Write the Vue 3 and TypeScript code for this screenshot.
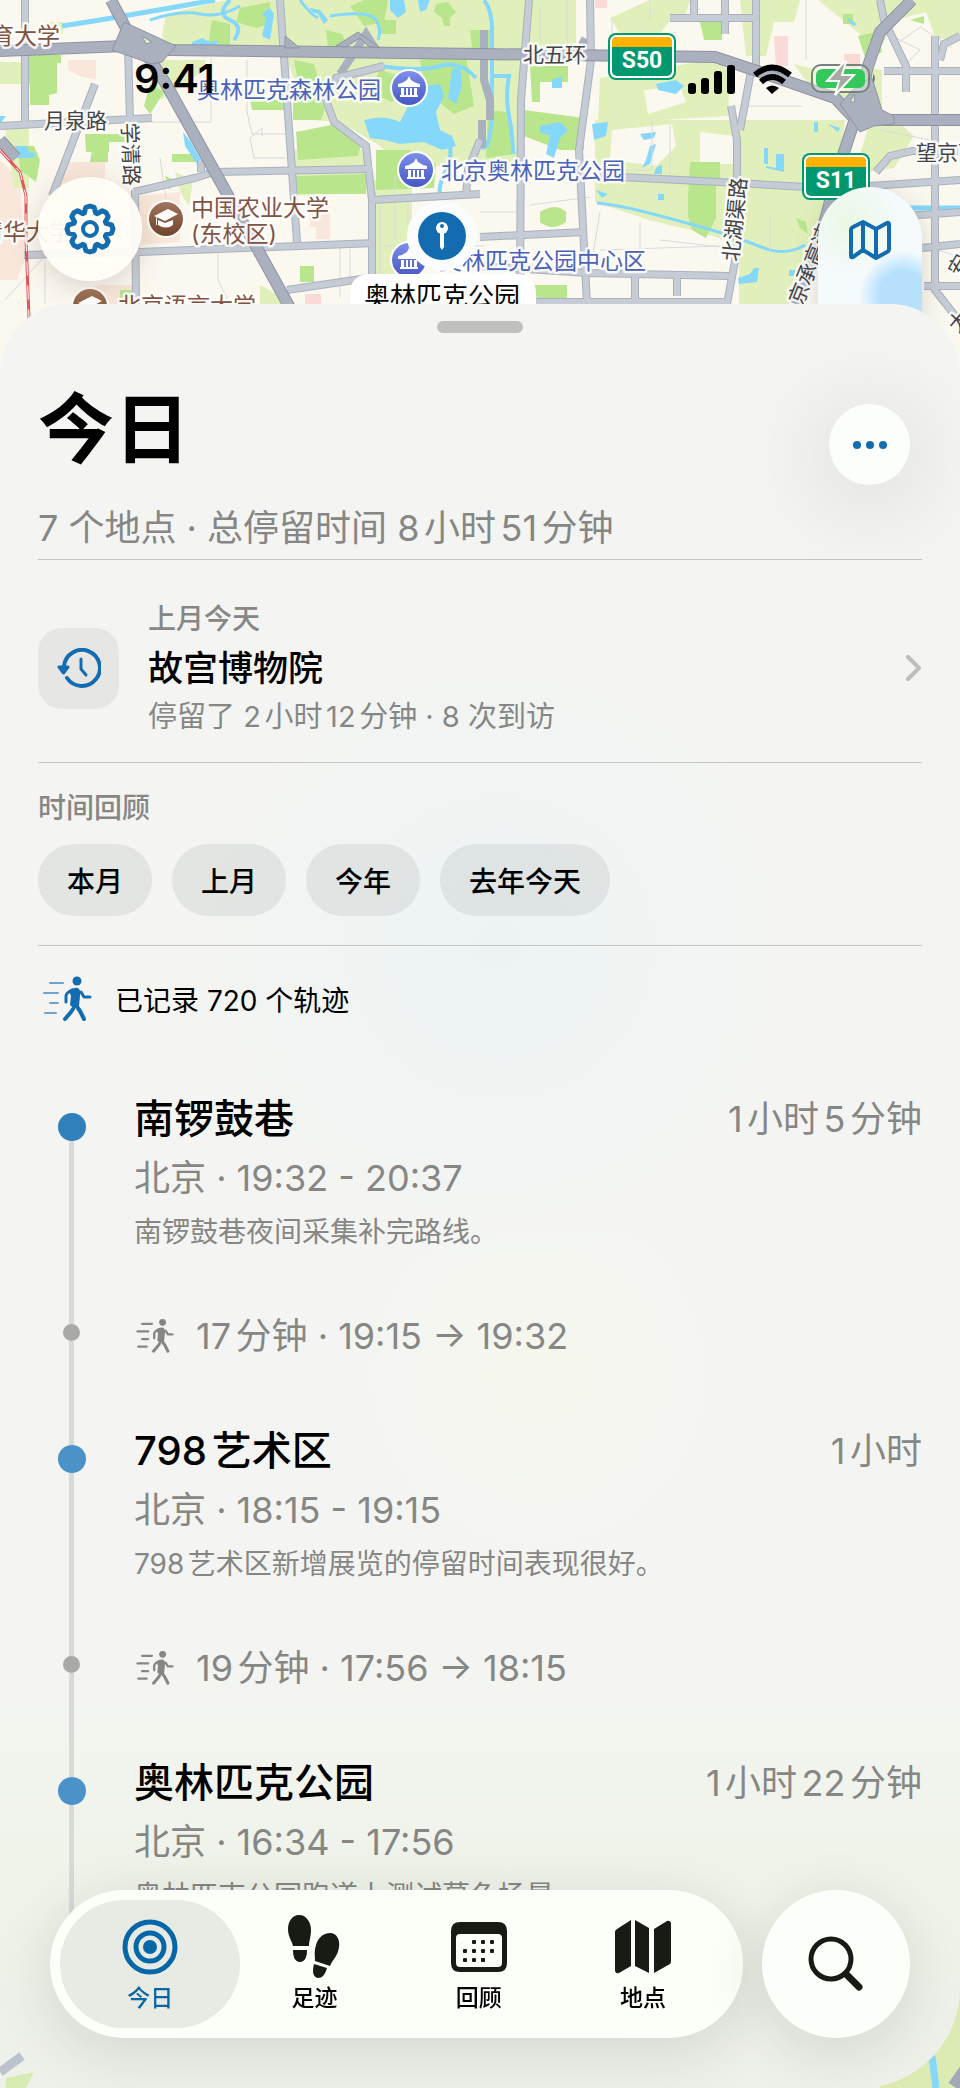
<script setup lang="ts">
interface Stop {
  name: string
  city: string
  span: string
  note: string
  duration: string
  walk?: string
}

interface Tab {
  id: string
  label: string
}

const stops: Stop[] = [
  {
    name: '南锣鼓巷',
    city: '北京',
    span: '19:32 - 20:37',
    note: '南锣鼓巷夜间采集补完路线。',
    duration: '1小时5分钟',
    walk: '17分钟 · 19:15 → 19:32',
  },
  {
    name: '798艺术区',
    city: '北京',
    span: '18:15 - 19:15',
    note: '798艺术区新增展览的停留时间表现很好。',
    duration: '1小时',
    walk: '19分钟 · 17:56 → 18:15',
  },
  {
    name: '奥林匹克公园',
    city: '北京',
    span: '16:34 - 17:56',
    note: '奥林匹克公园跑道上测试暮色场景。',
    duration: '1小时22分钟',
  },
]

const periods = ['本月', '上月', '今年', '去年今天']

const tabs: Tab[] = [
  { id: 'today', label: '今日' },
  { id: 'steps', label: '足迹' },
  { id: 'review', label: '回顾' },
  { id: 'places', label: '地点' },
]

const pavilions = [
  { x: 409, y: 88 },
  { x: 416, y: 170 },
  { x: 409, y: 260 },
]

const shields = [
  { x: 608, y: 33, label: 'S50' },
  { x: 802, y: 153, label: 'S11' },
]

// Outline of an eight-toothed gear centred on 0,0
function gearPath(): string {
  const teeth = 8
  const step = (Math.PI * 2) / teeth
  const points: string[] = []
  for (let i = 0; i < teeth; i++) {
    const a = i * step - Math.PI / 2
    const corners: [number, number][] = [
      [17, -0.34],
      [22, -0.19],
      [23, 0],
      [22, 0.19],
      [17, 0.34],
    ]
    for (const [r, d] of corners) {
      points.push(`${(r * Math.cos(a + d)).toFixed(2)} ${(r * Math.sin(a + d)).toFixed(2)}`)
    }
  }
  return `M${points.join('L')}Z`
}
const gear = gearPath()
</script>

<template>
  <div class="screen">
    <div class="map" aria-hidden="true">
      <svg class="map-art" viewBox="0 0 960 400" preserveAspectRatio="xMidYMin slice">
        <defs>
          <linearGradient id="poiBlue" x1="0" y1="0" x2="0" y2="1">
            <stop offset="0" stop-color="#7c8fe8" />
            <stop offset="1" stop-color="#4658c4" />
          </linearGradient>
          <linearGradient id="poiBrown" x1="0" y1="0" x2="0" y2="1">
            <stop offset="0" stop-color="#a2765c" />
            <stop offset="1" stop-color="#6f452c" />
          </linearGradient>
        </defs>
        <rect width="960" height="400" fill="#fbf8f0" />

        <g fill="#f9e7dc">
          <path d="M68 60h28v20l-16-4-12-6z M60 162h45v38l-10 8H62z M0 160l20 20 5 80 -8 20H0z M136 196l44-4v50l-42 3z M310 205h20v34h-14v-12h-6z M95 285h45v19H95z" />
          <path d="M774 36h14v30h-12z M844 54h16v14h-16z M595 0h12v8h-12z M305 294h16v10h-16z" fill="#f9dad6" />
        </g>

        <g fill="#e1f0bb">
          <path d="M166 14l60-14h350v46l-60 4H170l-8-14z" />
          <path d="M45 22h18v12H45z M0 62h24v22H0z M145 60h60v10l-44 30 z" />
          <path d="M285 56h240l-2 110H400l-20-20-40-24-30-2z" />
          <path d="M292 150l70 0 8 40-76 6z" />
          <path d="M595 120h250l-8 60-20 70-28 54h-50v-60l-40-12-50-12-54-18z" />
          <path d="M600 78l110-18 20 10-2 46-130 8z" />
          <path d="M536 0h24v30l20 16h-46z M610 18l40-18h40l-6 20h-14l-10 14h-40z M740 0h60l-6 22h-20l-8 34h-20z" />
          <path d="M818 0h142v36l-24 4-10-28-30 8-20 34 -16-20z M794 64l58 16v20l-40-10z" />
          <path d="M862 66l20 4v40h-10z M868 128l30-6 16 14-20 32-40 6z" />
          <path d="M5 128h24v60H14z M175 172l18 8-4 26-8-12z M260 285l18 10 6 9h-24z M372 180h40v130h-36z" />
          <path d="M752 272l46-8-6 20-40 16z" />
        </g>
        <path d="M612 130l60-6 4 22-20 20-46-6z M644 90l36-4 6 16-38 12z M700 132l34 4v28h-34z" fill="#fbf8f0" />

        <g fill="#b9e68d">
          <path d="M27 55h34v8h-4v30l-8 2v10H30V84h-4z M85 134h44v8h-20v10H86z M92 150h16v12H90z M18 146h16l6 14-4 22-16-12z" />
          <path d="M150 84l14 8-14 22-6-8z M165 176l10 4-6 10z M172 154h24v8h-24z" />
          <path d="M250 100h34v10h-32z M293 82l22-4v16l10 14-4 12h-28z M294 60l20 4 4 14-20 4z" />
          <path d="M296 132l40-8 26 18-4 14-60 4z M296 176h50v18h-48z M300 176l66-2v20h-40z" />
          <path d="M376 150h34l26 14-2 24-58 2z M420 60l46-4 8 50-20 8-28-22z M380 70l28 8-16 24-24-10z" />
          <path d="M326 30l16 4 6 14h-20z M350 6l14-6h24l-4 22-20 4z M240 8l30-6v22l-14 4-20-6z M212 20l18 4v22h-22z" />
          <path d="M436 4l12-2 8 10-6 6v8h-6l-2-8-8-6z M378 20h18v14h-18z M470 30h22v18h-20z" />
          <path d="M488 110l18 2 10 42-30 4z M530 66h38v16h-28v20h-8z M524 110l60 8v32h-24l-36-14z" />
          <path d="M540 212q16-10 26 0v10q-14 10-26 0z M690 162h30v16h-4v40l-10 20-14-8-4-14v-20z M700 22h22v18h-18z" />
          <path d="M796 218l10 4 2 12-8-6z M533 285h34v14h-30z M858 36l18-4 6 20-16 8z M843 14h10v10h-10z" />
          <path d="M300 266h14v16h-14z M398 290h16v14h-16z M120 290h14v14h-14z M910 20l14-4v8z" />
        </g>

        <g fill="#86d8fb">
          <path d="M364 120q20-6 36 2l10-20 16-16 14-2 4 12-8 16 4 18 12 6 4 10-14 4-18-8-24 2-16-4-14-2z" />
          <path d="M15 146h12l2 6 8 2-4 4h-18z M0 116h6l-6 8z M183 132l8 10 10 18-4 4-12-18z" />
          <path d="M452 70l8-4 2 20-6 18-8-6z M192 42l10-4 8 4 8-2-2 6-24-1z M262 14l8-6 4 6-4 26 -8-4 4-18z" />
          <path d="M390 0h14l2 12-8 6-8-8z M310 8l10 2 8 10-4 4-6-10-6-2z M418 0h12l-4 10-6 2z" />
          <path d="M552 80l10-4v12h-10z M540 126l20-4 8 8-8 8-6 20-8-4 4-18-10-4z M592 124l16-2-2 14-12 4z" />
          <path d="M656 84l20-4 8 6-8 8-18-4z M640 134l16-2-2 6-10 2z M650 146l6-2-6 20-8 4 4-8z M656 168l6-4v10h-8z" />
          <path d="M764 148h4v16h-4z M766 166l10 2v-14h8v18l-18-4z M814 122h4v10h-4z M828 124l12 4-2 4z M845 16l12 8-4 2z" />
          <path d="M738 278l12-4 4-6h5l-2 14-18 2z M789 270h6v6h-6z M658 194h6v6h-6z M596 190l12 4-6 4z" />
        </g>
        <g fill="none" stroke="#86d8fb">
          <path d="M62 26L100 20L170 8L215 0" stroke-width="5" />
          <path d="M150 20q30-10 50-6t40-8" stroke-width="3" />
          <path d="M230 0q-14 14 0 20t4 20" stroke-width="4" />
          <path d="M300 0q10 14 18 18M330 16q40-6 46 4t2 20" stroke-width="3" />
          <path d="M484 0q8 10 8 30t0 70-10 48M493 76h16q-4 20 0 40t4 38" stroke-width="4" />
          <path d="M597 203q20 2 44 8t60 16 60 20 44-2" stroke-width="3" />
          <path d="M380 66q40 6 60 0t36 12M448 140q6 14-2 30t-6 24" stroke-width="4" />
          <path d="M905 208H960" stroke-width="5" />
        </g>

        <g fill="none" stroke="#d9dadd" stroke-width="1">
          <path d="M211 58v64H152M247 60v52l5 22h33M262 136v-8l-12 10 4 20h32M160 158l6 40M218 250v30l12 24M45 262v42M5 300l40-44" />
          <path d="M540 6v34M567 0v50M612 18v26h44M650 0v20M652 120v50h-64M480 212h38M530 205l60-8M640 222v56M600 250l120-4M600 212l-10 60" />
          <path d="M700 8l-12 12M806 0v60M740 106h62M670 124v60M770 214v40M880 30l40 20-20 20M896 44l26-18M922 28l30 20" />
          <path d="M380 200v100M395 176v64M408 194v30M340 248v50M350 246v32M384 246h100M660 240l70 8M880 130l50 10M896 236l60 20" />
        </g>

        <g fill="none" stroke="#a9b1bd" stroke-width="8">
          <path d="M25 0V122M0 126L152 118M128 46L130 120M95 84L52 196M280 0L287 100L297 242M529 0L521 100L520 304" />
          <path d="M590 0L591 60L579 150L587 304M134 192L195 178L214 172L372 169M24 255L140 252L375 243M135 190L136 304" />
          <path d="M201 172V160M384 66L336 78L326 100L334 122L366 146L372 200V304M372 200L480 194M480 140L468 170L466 196" />
          <path d="M600 176L720 182L822 188M731 106L737 140V250L727 304M752 66L740 130M756 0V66M480 237L585 232M480 266L587 273L729 276" />
          <path d="M287 290L375 277M480 302H725M635 276V304M677 276V296M670 18H756M694 0V18M725 0V34" />
          <path d="M935 36V290L960 322M880 0L884 20L906 66V92M884 71H960M876 172L890 156L912 151H960M870 186L960 180M906 216L960 212M922 248L960 244M940 60L944 44L960 36M924 286H960" />
          <path d="M484 30V80L490 100V120M482 120V148M580 40L592 46M340 74L356 50L366 34L380 56" />
        </g>
        <g fill="none" stroke="#c5ccd5" stroke-width="6">
          <path d="M25 0V122M0 126L152 118M128 46L130 120M95 84L52 196M280 0L287 100L297 242M529 0L521 100L520 304" />
          <path d="M590 0L591 60L579 150L587 304M134 192L195 178L214 172L372 169M24 255L140 252L375 243M135 190L136 304" />
          <path d="M201 172V160M384 66L336 78L326 100L334 122L366 146L372 200V304M372 200L480 194M480 140L468 170L466 196" />
          <path d="M600 176L720 182L822 188M731 106L737 140V250L727 304M752 66L740 130M756 0V66M480 237L585 232M480 266L587 273L729 276" />
          <path d="M287 290L375 277M480 302H725M635 276V304M677 276V296M670 18H756M694 0V18M725 0V34" />
          <path d="M935 36V290L960 322M880 0L884 20L906 66V92M884 71H960M876 172L890 156L912 151H960M870 186L960 180M906 216L960 212M922 248L960 244M940 60L944 44L960 36M924 286H960" />
        </g>
        <g fill="none" stroke="#8d93a3" stroke-width="12" stroke-linejoin="round">
          <path d="M0 51L125 46L170 50L480 54L715 57L760 72L835 98L856 120H960" />
          <path d="M111 0L130 36L152 62L166 84L225 190L290 308" />
          <path d="M912 0L880 32L868 66L858 110L838 170L822 232L796 304" />
          <path d="M0 140L16 158" />
        </g>
        <g fill="none" stroke="#abb0bf" stroke-width="10" stroke-linejoin="round">
          <path d="M0 51L125 46L170 50L480 54L715 57L760 72L835 98L856 120H960" />
          <path d="M111 0L130 36L152 62L166 84L225 190L290 308" />
          <path d="M912 0L880 32L868 66L858 110L838 170L822 232L796 304" />
          <path d="M0 140L16 158" />
        </g>
        <g fill="#abb0bf" stroke="#8d93a3">
          <path d="M124 22L176 46L162 62L152 64L112 50Z M858 84L872 78L882 110L894 116V124L874 126L860 132L840 104Z" />
          <path d="M142 36l10 6-6 2zM850 102l4-8 1 8z" fill="#dfe9c4" />
          <path d="M336 46L358 32L380 48L368 46L360 38L346 47Z M285 36L300 48H285Z" />
        </g>
        <path d="M0 150L20 172L26 196V240L29 318" fill="none" stroke="#e2565a" stroke-width="3" />
        <path d="M0 150L20 172L26 196V240L29 318" fill="none" stroke="#fff" stroke-width="1" stroke-dasharray="14 10" />

        <g class="halo brown">
          <text x="-9" y="44">育大学</text>
          <text x="191" y="216">中国农业大学</text>
          <text x="191" y="242">(东校区)</text>
          <text x="-20" y="240">清华大学</text>
          <text x="118" y="314">北京语言大学</text>
        </g>
        <g class="halo blue">
          <text x="197" y="98">奥林匹克森林公园</text>
          <text x="441" y="179">北京奥林匹克公园</text>
          <text x="439" y="269">奥林匹克公园中心区</text>
        </g>
        <g class="halo road">
          <text x="523" y="62">北五环</text>
          <text x="44" y="128">月泉路</text>
          <text x="916" y="160">望京西</text>
          <text transform="translate(122 123) rotate(88)">学清路</text>
          <text transform="translate(738 262) rotate(-84)">北湖渠路</text>
          <text transform="translate(802 306) rotate(-68)">京承高速</text>
          <text transform="translate(960 278) rotate(-60)">安</text>
          <text transform="translate(958 334) rotate(-50)">大</text>
        </g>

        <g v-for="(p, i) in pavilions" :key="i" :transform="`translate(${p.x} ${p.y})`">
          <circle r="19" fill="#fff" />
          <circle r="17" fill="url(#poiBlue)" />
          <path d="M0-12l2 4q4 3 9 4v3h-22v-3q5-1 9-4z M-8 0h3v7h-3z M-3 0h2v7h-2z M1 0h2v7h-2z M5 0h3v7h-3z M-9 7H9v2H-9z" fill="#fff" />
        </g>
        <g v-for="p in [{ x: 166, y: 219 }, { x: 90, y: 306 }]" :key="p.y" :transform="`translate(${p.x} ${p.y})`">
          <circle r="19" fill="#fff" />
          <circle r="17" fill="url(#poiBrown)" />
          <path d="M-12-3L2-10L12-5L-1 2Z M-8 1L-1 4L7 1V6Q0 11-8 6Z M-10-2v8h1v-7z" fill="#fff" />
        </g>

        <g v-for="s in shields" :key="s.label" :transform="`translate(${s.x} ${s.y})`">
          <rect width="68" height="47" rx="8" fill="#00996f" />
          <rect x="2" y="2" width="64" height="43" rx="6" fill="#fff" />
          <rect x="4" y="4" width="60" height="39" rx="5" fill="#00996f" />
          <path d="M4 14V9Q4 4 9 4H59Q64 4 64 9V14Z" fill="#ffb300" />
          <text x="34" y="35" class="shield">{{ s.label }}</text>
        </g>

        <g transform="translate(442 236)">
          <rect x="-92" y="38" width="186" height="60" rx="18" fill="#fff" />
          <circle r="35" fill="#fafcfd" />
          <circle r="24" fill="#146cb0" />
          <circle cy="-8" r="6" fill="#fff" />
          <circle cy="-10" r="2" fill="#146cb0" />
          <path d="M-2-4h4v15l-2 3-2-3z" fill="#fff" />
          <text x="0" y="70" class="place">奥林匹克公园</text>
        </g>
      </svg>
      <svg class="map-foot" viewBox="0 0 960 120" preserveAspectRatio="none">
        <rect width="960" height="120" fill="#eef0ea" />
        <path d="M0 104L22 88" stroke="#bcc3cd" stroke-width="9" />
        <path d="M6 110l28-6-8 16H6z" fill="#d9ebb4" />
        <path d="M880 0h80v120h-80z" fill="#dcebb4" />
        <path d="M932 88l4 32" stroke="#86d8fb" stroke-width="7" />
        <path d="M956 120l14-20" stroke="#a3a8b5" stroke-width="18" />
      </svg>
    </div>

    <div class="status">
      <span class="clock">9:41</span>
      <svg class="indicators" viewBox="0 0 190 32" aria-hidden="true">
        <rect x="0" y="20" width="8" height="11" rx="3" />
        <rect x="13" y="15" width="8" height="16" rx="3" />
        <rect x="26" y="8" width="8" height="23" rx="3" />
        <rect x="39" y="2" width="8" height="29" rx="3" />
        <g fill="none" stroke="#000" stroke-width="6">
          <path d="M67 12Q84-3 102 12" />
          <path d="M73 19Q84 9 96 19" />
        </g>
        <path d="M78 25Q84 20 91 25L84 31Z" />
        <rect x="124" y="2" width="57" height="27" rx="9" fill="#fff" fill-opacity="0.4" stroke="#77837a" stroke-width="2" />
        <rect x="128" y="6" width="49" height="19" rx="6" fill="#34c759" />
        <path d="M185 11q4 4 0 9z" fill="#6d7277" />
        <path d="M156-1L139 18H151L147 32L166 12H154L158-1Z" fill="#a9a9a3" stroke="#fff" stroke-width="2" />
      </svg>
    </div>

    <div class="map-controls">
      <button class="round-control" type="button" aria-label="设置">
        <svg viewBox="-27 -27 54 54" width="54" height="54" fill="none" stroke="#146cb0" stroke-width="5" stroke-linejoin="round">
          <path :d="gear" />
          <circle r="7" stroke-width="4" />
        </svg>
      </button>
      <button class="map-control" type="button" aria-label="地图样式">
        <svg viewBox="0 0 44 42" width="44" height="42" fill="none" stroke="#146cb0" stroke-width="4" stroke-linejoin="round">
          <path d="M3 11Q3 9 5 8L15 3L28 10L39 4Q41 3 41 6V30Q41 32 39 33L28 39L15 31L5 38Q3 39 3 37Z" />
          <path d="M15 3V31M28 10V39" />
        </svg>
      </button>
    </div>

    <main class="sheet">
      <div class="grabber"></div>
      <header class="head">
        <h1>今日</h1>
        <button class="more" type="button" aria-label="更多"><i></i><i></i><i></i></button>
      </header>
      <p class="summary">7 个地点 · 总停留时间 8小时51分钟</p>

      <a class="memory" href="#memory">
        <span class="memory-icon">
          <svg viewBox="0 0 44 40" width="44" height="40" fill="none" stroke="#146cb0" stroke-width="3" stroke-linecap="round" stroke-linejoin="round">
            <path d="M6 18A18 18 0 1 1 9 30" stroke-width="4" transform="translate(1 0)" />
            <path d="M2 19H11L6.500 25Z" fill="#146cb0" />
            <path d="M24 11V21L29 27" />
          </svg>
        </span>
        <span class="memory-text">
          <span class="small strong">上月今天</span>
          <span class="memory-title">故宫博物院</span>
          <span class="small detail">停留了 2小时12分钟 · 8 次到访</span>
        </span>
        <svg class="chevron" viewBox="0 0 16 26" width="16" height="26" aria-hidden="true">
          <path d="M2 2L13 13L2 24" fill="none" stroke="#bdbebc" stroke-width="4" stroke-linecap="round" stroke-linejoin="round" />
        </svg>
      </a>

      <section class="recap">
        <h2>时间回顾</h2>
        <div class="chips">
          <button v-for="p in periods" :key="p" type="button">{{ p }}</button>
        </div>
      </section>

      <p class="tracks">
        <svg class="walk-large" viewBox="-4 0 58 50" aria-hidden="true">
          <use href="#walker" />
        </svg>
        已记录 720 个轨迹
      </p>

      <svg class="symbols" aria-hidden="true">
        <symbol id="walker" viewBox="0 0 50 50" overflow="visible" width="50" height="50">
          <g fill="none" stroke="currentColor" stroke-linecap="round" class="speed">
            <path d="M8 9H21M2 19H16M8 29H16M3 39H14" />
          </g>
          <circle cx="35" cy="7" r="4.500" fill="currentColor" />
          <g fill="none" stroke="currentColor" stroke-linecap="round" stroke-linejoin="round">
            <path d="M24 28V22Q24 19 30 16" stroke-width="3" />
            <path d="M39 18L42 23H48" stroke-width="3" />
            <path d="M31 35L29 38L23 45" stroke-width="4" />
            <path d="M33 30L38 37L42 45" stroke-width="4" />
          </g>
          <path d="M27 17Q31 13 36 14Q39 16 38 22L37 32Q33 37 28 31L29 22Z" fill="currentColor" />
        </symbol>
      </svg>

      <ol class="timeline">
        <template v-for="(stop, i) in stops" :key="stop.name">
          <li class="entry visit" :class="{ first: i === 0 }">
            <span class="rail"><i class="lead"></i><i class="dot"></i><i class="line"></i></span>
            <div class="body">
              <div class="row">
                <h3>{{ stop.name }}</h3>
                <span class="duration">{{ stop.duration }}</span>
              </div>
              <p class="meta">{{ stop.city }} · {{ stop.span }}</p>
              <p class="note">{{ stop.note }}</p>
            </div>
          </li>
          <li v-if="stop.walk" class="entry walk">
            <span class="rail"><i class="lead"></i><i class="dot"></i><i class="line"></i></span>
            <div class="body">
              <svg class="walk-small" viewBox="0 0 50 50" aria-hidden="true"><use href="#walker" /></svg>
              <span>{{ stop.walk }}</span>
            </div>
          </li>
        </template>
      </ol>
    </main>

    <div class="dock">
      <nav class="tabs">
        <button v-for="tab in tabs" :key="tab.id" type="button" :class="{ active: tab.id === 'today' }">
          <svg viewBox="0 0 64 64" width="64" height="64" aria-hidden="true">
            <g v-if="tab.id === 'today'" fill="none" stroke="#0566a8" stroke-width="5">
              <circle cx="32" cy="32" r="25" />
              <circle cx="32" cy="32" r="14" stroke-width="5" />
              <circle cx="32" cy="32" r="7" fill="#0566a8" stroke="none" />
            </g>
            <g v-else-if="tab.id === 'steps'">
              <path d="M17 0C25 0 29 8 29 15C29 22 27 26 27 31H11C10 26 6 22 6 14C6 7 10 0 17 0Z M11 35H25C25 42 23 47 18 47C13 47 11 42 11 35Z" />
              <path d="M48 18C55 18 58 25 57 32C56 41 51 44 48 51L33 46C33 40 32 37 34 30C36 23 41 18 48 18Z M32 49L45 53C43 60 40 63 36 63C31 62 30 57 32 49Z" />
            </g>
            <g v-else-if="tab.id === 'review'">
              <path fill-rule="evenodd" d="M13 7H51Q60 7 60 16V48Q60 57 51 57H13Q4 57 4 48V16Q4 7 13 7Z M13 19Q9 19 9 23V48Q9 52 13 52H51Q55 52 55 48V23Q55 19 51 19Z" />
              <g>
                <rect v-for="c in 11" :key="c" :x="[25, 34, 43, 16, 25, 34, 43, 16, 25, 34, 34][c - 1]" :y="[25, 25, 25, 34, 34, 34, 34, 43, 43, 43, 43][c - 1]" width="4" height="4" rx="1" />
              </g>
            </g>
            <g v-else>
              <path d="M6 14Q4 15 4 17V56Q5 59 8 58L20 51V5Z M24 5V51L38 58V13Z M43 14V58L59 49Q60 48 60 46V8Q59 5 56 6Z" />
            </g>
          </svg>
          <span>{{ tab.label }}</span>
        </button>
      </nav>
      <button class="search" type="button" aria-label="搜索">
        <svg viewBox="0 0 56 56" width="56" height="56" fill="none" stroke="#181a14" aria-hidden="true">
          <circle cx="23" cy="23" r="20" stroke-width="5" />
          <path d="M38 38L51 51" stroke-width="7" stroke-linecap="round" />
        </svg>
      </button>
    </div>
  </div>
</template>

<style>
body {
  background: #fbf8f0;
}
</style>

<style scoped>
.screen {
  position: relative;
  min-height: 100vh;
  display: flex;
  flex-direction: column;
  overflow: hidden;
  font-family: Inter, 'Noto Sans CJK SC', sans-serif;
  color: #000;
  text-autospace: normal;
}
h1,
h2,
h3,
p,
ol {
  margin: 0;
  padding: 0;
  font-weight: 400;
}
button {
  border: 0;
  padding: 0;
  font: inherit;
  color: inherit;
  cursor: pointer;
}
.map {
  position: absolute;
  inset: 0;
  display: flex;
  flex-direction: column;
  justify-content: space-between;
}
.map-art {
  width: 100%;
  height: 400px;
}
.map-foot {
  width: 100%;
  height: 120px;
}
.halo {
  font-size: 23px;
  paint-order: stroke;
  stroke: #fff;
  stroke-opacity: 0.85;
  stroke-width: 5px;
  stroke-linejoin: round;
}
.brown {
  fill: #805343;
}
.blue {
  fill: #4a63b8;
}
.road {
  fill: #444;
  font-size: 21px;
}
.shield {
  fill: #fff;
  font-family: Roboto, sans-serif;
  font-size: 23px;
  font-weight: 700;
  text-anchor: middle;
}
.place {
  font-size: 26px;
  text-anchor: middle;
}
.status {
  position: relative;
  display: flex;
  justify-content: space-between;
  align-items: center;
  height: 48px;
  margin-top: 55px;
  padding: 0 82px 0 134px;
}
.clock {
  font-size: 40px;
  line-height: 48px;
  font-weight: 600;
}
.indicators {
  width: 190px;
  height: 32px;
  overflow: visible;
}
.map-controls {
  position: relative;
  display: flex;
  justify-content: space-between;
  height: 127px;
  margin-top: 74px;
  padding: 0 38px;
}
.round-control {
  display: grid;
  place-items: center;
  width: 104px;
  height: 104px;
  border-radius: 50%;
  background: rgba(255, 253, 245, 0.94);
  box-shadow: 0 6px 30px rgba(90, 70, 30, 0.2);
}
.map-control {
  display: grid;
  justify-items: center;
  align-items: start;
  width: 104px;
  height: 180px;
  margin-top: 10px;
  padding-top: 32px;
  border-radius: 52px;
  background:
    radial-gradient(circle at 82% 60%, #b5e1fd 0 24px, rgba(181, 225, 253, 0) 44px),
    radial-gradient(circle at 30% 20%, #e8f8e4, rgba(232, 248, 228, 0) 50px),
    #f5fafc;
  box-shadow: 0 4px 24px rgba(60, 60, 60, 0.18);
}
.sheet {
  position: relative;
  box-sizing: border-box;
  height: calc(100vh - 304px);
  padding: 17px 38px 0;
  border-radius: 70px 70px 100px 100px;
  overflow: hidden;
  background:
    radial-gradient(circle at 52% 36%, rgba(234, 242, 245, 0.7), rgba(234, 242, 245, 0) 320px),
    radial-gradient(circle at 56% 60%, rgba(245, 248, 235, 0.6), rgba(245, 248, 235, 0) 200px),
    linear-gradient(#f4f5f2 0 75%, #eff3e9 90%, #eef0ea);
}
.grabber {
  width: 86px;
  height: 12px;
  margin: 0 auto;
  border-radius: 6px;
  background: #c0c1be;
}
.head {
  display: flex;
  justify-content: space-between;
  align-items: flex-start;
  margin-top: 50px;
  padding-right: 12px;
}
h1 {
  font-size: 76px;
  line-height: 92px;
  font-weight: 700;
}
.more {
  display: flex;
  align-items: center;
  justify-content: center;
  gap: 5px;
  width: 81px;
  height: 81px;
  margin-top: 21px;
  border-radius: 50%;
  background: #fcfefb;
  box-shadow: 0 12px 90px 10px rgba(0, 0, 0, 0.1);
}
.more i {
  width: 8px;
  height: 8px;
  border-radius: 50%;
  background: #146cb0;
}
.summary {
  padding-bottom: 9px;
  margin-top: 21px;
  border-bottom: 1px solid #c6c7c5;
  font-size: 36px;
  line-height: 44px;
  color: #868785;
}
.memory {
  display: flex;
  align-items: center;
  padding: 39px 0 25px;
  border-bottom: 1px solid #c6c7c5;
  color: inherit;
  text-decoration: none;
}
.memory-icon {
  display: grid;
  place-items: center;
  width: 81px;
  height: 81px;
  margin-right: 29px;
  border-radius: 24px;
  background: #e6e7e5;
}
.memory-text {
  display: flex;
  flex: 1;
  flex-direction: column;
}
.small {
  font-size: 28px;
  line-height: 40px;
  color: #868785;
}
.strong {
  font-weight: 500;
}
.detail {
  font-size: 29px;
}
.memory-title {
  font-size: 35px;
  line-height: 58px;
  font-weight: 500;
}
.recap {
  padding: 27px 0 29px;
  border-bottom: 1px solid #c6c7c5;
}
h2 {
  font-size: 28px;
  line-height: 36px;
  font-weight: 500;
  color: #868785;
}
.chips {
  display: flex;
  gap: 20px;
  margin-top: 18px;
}
.chips button {
  height: 72px;
  padding: 0 29px;
  border-radius: 36px;
  background: rgba(20, 30, 30, 0.07);
  font-size: 28px;
  font-weight: 500;
}
.tracks {
  display: flex;
  align-items: center;
  gap: 19px;
  height: 50px;
  margin-top: 28px;
  font-size: 28px;
}
.walk-large {
  width: 58px;
  height: 50px;
  color: #146cb0;
}
.symbols {
  display: block;
  width: 0;
  height: 0;
}
.speed {
  opacity: var(--speed-opacity, 0.6);
  stroke-width: var(--speed-width, 2px);
}
.timeline {
  margin-top: 69px;
  list-style: none;
}
.entry {
  display: flex;
  gap: 29px;
}
.rail {
  display: flex;
  flex: 0 0 67px;
  flex-direction: column;
  align-items: center;
}
.lead,
.line {
  width: 5px;
  background: #d9dad8;
}
.line {
  flex: 1;
}
.lead {
  height: 20px;
}
.first .lead {
  background: none;
}
.dot {
  width: 28px;
  height: 28px;
  border-radius: 50%;
  background: #4a92c7;
}
.first .dot {
  background: #3080bb;
}
.body {
  flex: 1;
  min-width: 0;
}
.row {
  display: flex;
  align-items: center;
  justify-content: space-between;
}
h3 {
  font-size: 40px;
  line-height: 52px;
  font-weight: 500;
}
.duration,
.meta {
  font-size: 36px;
  line-height: 48px;
  color: #868785;
}
.meta {
  margin-top: 9px;
}
.note {
  margin-top: 10px;
  font-size: 28px;
  line-height: 40px;
  color: #868785;
}
.walk .lead {
  height: 72px;
}
.walk .dot {
  width: 17px;
  height: 17px;
  background: #a9aaa8;
}
.walk .body {
  display: flex;
  align-items: center;
  gap: 22px;
  padding: 60px 0 65px;
  font-size: 36px;
  line-height: 48px;
  color: #868785;
}
.walk-small {
  --speed-opacity: 1;
  --speed-width: 3px;
  width: 38px;
  height: 38px;
  margin-left: 2px;
}
.dock {
  position: fixed;
  right: 50px;
  bottom: 50px;
  left: 50px;
  display: flex;
  gap: 19px;
}
.tabs {
  display: flex;
  flex: 1;
  box-sizing: border-box;
  height: 148px;
  padding: 10px 18px;
  border-radius: 74px;
  background: #fcfff7;
  box-shadow: 0 12px 60px rgba(30, 50, 40, 0.14);
}
.tabs button {
  position: relative;
  display: flex;
  flex: 1;
  flex-direction: column;
  align-items: center;
  padding-top: 15px;
  background: none;
  font-size: 23px;
  line-height: 32px;
  font-weight: 500;
}
.tabs button > * {
  position: relative;
}
.tabs svg {
  fill: #181a14;
}
.tabs span {
  margin-top: 3px;
}
.tabs .active {
  color: #0566a8;
}
.tabs .active::before {
  content: '';
  position: absolute;
  inset: 0 -8px;
  border-radius: 64px;
  background: #e7ebe3;
}
.search {
  display: grid;
  place-items: center;
  width: 148px;
  height: 148px;
  border-radius: 50%;
  background: #fcfff9;
  box-shadow: 0 12px 60px rgba(30, 50, 40, 0.14);
}
</style>
